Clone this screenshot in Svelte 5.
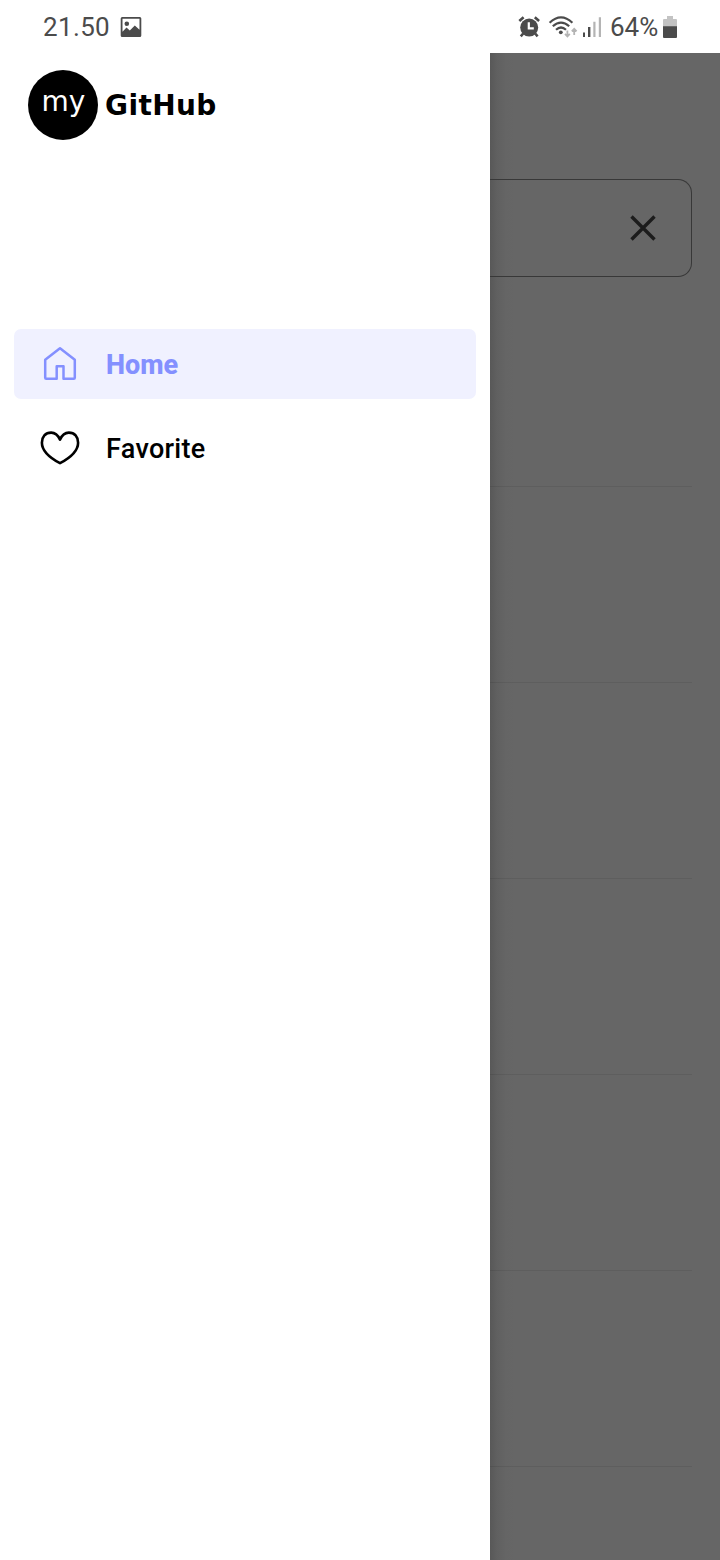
<script>
  const repositories = [1, 2, 3, 4, 5, 6];
</script>

<div class="phone">
  <header class="status">
    <span class="time">21.50</span>
    <svg class="photo" width="22" height="20" viewBox="0 0 22 20">
      <path fill="#4b4b4b" fill-rule="evenodd" d="M2.2 0h17.6a1.5 1.5 0 0 1 1.5 1.5v17a1.5 1.5 0 0 1-1.5 1.5H2.2a1.5 1.5 0 0 1-1.5-1.5v-17A1.5 1.5 0 0 1 2.2 0ZM2.5 1.8v13l4-4.2 3.3 2.8 5-5 4.7 4.4v-11ZM6.8 4.5a2.3 2.3 0 1 1 0 4.6a2.3 2.3 0 0 1 0-4.6Z" />
    </svg>
    <span class="grow"></span>
    <svg class="alarm" width="22" height="22" viewBox="0 0 22 22" fill="none" stroke="#4b4b4b">
      <circle cx="11.2" cy="11.6" r="9" fill="#4b4b4b" stroke="none" />
      <path stroke-width="2.6" d="M1.3 5L5.6 1.2M21.1 5L16.8 1.2M5.2 17.5L2.8 20.3M17.2 17.5l2.4 2.8" />
      <path stroke="#fff" stroke-width="2.2" d="M10.8 6.2v6.2h5" />
    </svg>
    <svg class="wifi" width="30" height="24" viewBox="0 0 30 24" fill="none" stroke="#4b4b4b" stroke-width="2.2">
      <path d="M1.6 7.7Q13 -3 24.4 7.7M4.8 11.3Q13 3.8 21.2 11.3M8 14.8Q13 10.2 18 14.8" />
      <circle cx="12.8" cy="17.3" r="1.9" fill="#4b4b4b" stroke="none" />
      <path stroke="#b4b4b4" stroke-width="1.8" d="M19.4 15.4v6M17 18.9l2.4 2.6 2.4-2.6M26.2 20v-6M23.8 16.4l2.4-2.6 2.4 2.6" />
    </svg>
    <svg class="signal" width="20" height="22" viewBox="0 0 20 22">
      <path fill="#4b4b4b" d="M1 16.5h2V21H1zM6 11h2.4v10H6z" />
      <path fill="#b4b4b4" d="M11.3 5.8h2.2V21h-2.2zM16.8 1.2H19V21h-2.2z" />
    </svg>
    <span class="percent">64%</span>
    <svg class="battery" width="14" height="22" viewBox="0 0 14 22">
      <path fill="#c3c3c3" d="M4 0h6v3h3a1 1 0 0 1 1 1v7H0V4a1 1 0 0 1 1-1h3z" />
      <path fill="#4b4b4b" d="M0 10.3h14V21a1 1 0 0 1-1 1H1a1 1 0 0 1-1-1z" />
    </svg>
  </header>

  <main>
    <aside>
      <div class="brand">
        <span class="badge">my</span>
        <span class="name">GitHub</span>
      </div>
      <nav>
        <div class="item active">
          <svg width="40" height="40" viewBox="0 0 40 40" fill="none" stroke="#8490ff" stroke-width="2.5" stroke-linejoin="round">
            <path d="M20 4.2L34.8 15.8V33.8a1 1 0 0 1-1 1H23.5V22.2h-6.8V34.8H6.2a1 1 0 0 1-1-1V15.8Z" />
          </svg>
          <span>Home</span>
        </div>
        <div class="item favorite">
          <svg width="40" height="40" viewBox="0 0 40 40" fill="none" stroke="#000" stroke-width="2.6" stroke-linejoin="round">
            <path d="M20 11.6C17.8 6.8 15 4.6 11.2 4.6C5.4 4.6 1.9 8.9 1.9 14.7C1.9 22 9.5 29.6 20 35.2C30.5 29.6 38.1 22 38.1 14.7C38.1 8.9 34.6 4.6 28.8 4.6C25 4.6 22.2 6.8 20 11.6Z" />
          </svg>
          <span>Favorite</span>
        </div>
      </nav>
    </aside>

    <section class="page">
      <div class="search">
        <svg width="28" height="28" viewBox="0 0 28 28" stroke="#1c1c1c" stroke-width="3.4">
          <path d="M2.5 2.5l23 23M25.5 2.5l-23 23" />
        </svg>
      </div>
      <div class="list">
        {#each repositories as repository (repository)}
          <div class="row"></div>
        {/each}
      </div>
    </section>
  </main>
</div>

<style>
  :global(body) { background: #fff; }
  .phone {
    width: 720px;
    height: 1560px;
    display: flex;
    flex-direction: column;
    overflow: hidden;
    font-family: Roboto, sans-serif;
  }
  svg { display: block; flex: none; }
  .status {
    height: 53px;
    flex: none;
    box-sizing: border-box;
    padding: 0 43px;
    display: flex;
    align-items: center;
    color: #4b4b4b;
    font-size: 26px;
    line-height: 53px;
  }
  .time, .percent { padding-top: 2px; }
  .time { width: 77px; letter-spacing: .35px; }
  .grow { flex: 1; }
  .wifi { margin-left: 8px; }
  .signal { margin-left: 4px; }
  .percent { width: 51px; margin-left: 8px; white-space: nowrap; }
  .battery { margin-left: 2px; }
  main { flex: 1; display: flex; min-height: 0; }
  aside {
    width: 490px;
    flex: none;
    box-sizing: border-box;
    padding: 17px 14px 0;
    background: #fff;
  }
  .brand {
    height: 70px;
    padding-left: 14px;
    display: flex;
    align-items: center;
    gap: 7px;
  }
  .badge {
    width: 70px;
    height: 70px;
    box-sizing: border-box;
    padding-left: 1px;
    border-radius: 50%;
    background: #000;
    color: #fff;
    font: 28px/64px "DejaVu Sans", sans-serif;
    text-align: center;
  }
  .name {
    padding-top: 2px;
    font: bold 28px/70px "DejaVu Sans", sans-serif;
    letter-spacing: .4px;
    color: #000;
  }
  nav {
    margin-top: 189px;
    display: flex;
    flex-direction: column;
    gap: 14px;
  }
  .item {
    height: 70px;
    box-sizing: border-box;
    padding-left: 26px;
    display: flex;
    align-items: center;
    gap: 26px;
    border-radius: 7px;
    color: #000;
    font-size: 27px;
    font-weight: 500;
    line-height: 70px;
  }
  .item span { padding-top: 2px; letter-spacing: .3px; }
  .item.active { background: #f0f1ff; color: #8490ff; font-weight: 800; }
  .item.active span { letter-spacing: 0; }
  .page {
    flex: 1;
    padding: 126px 28px 0 0;
    background: linear-gradient(to right, #585858 0, #606060 7px, #656565 16px, #666 25px);
  }
  .search {
    height: 98px;
    box-sizing: border-box;
    padding-right: 34px;
    border: 1px solid #383838;
    border-left: 0;
    border-radius: 0 14px 14px 0;
    display: flex;
    align-items: center;
    justify-content: flex-end;
  }
  .list { margin-top: 14px; }
  .row { height: 196px; box-sizing: border-box; border-bottom: 1px solid rgba(0, 0, 0, .08); }
</style>
